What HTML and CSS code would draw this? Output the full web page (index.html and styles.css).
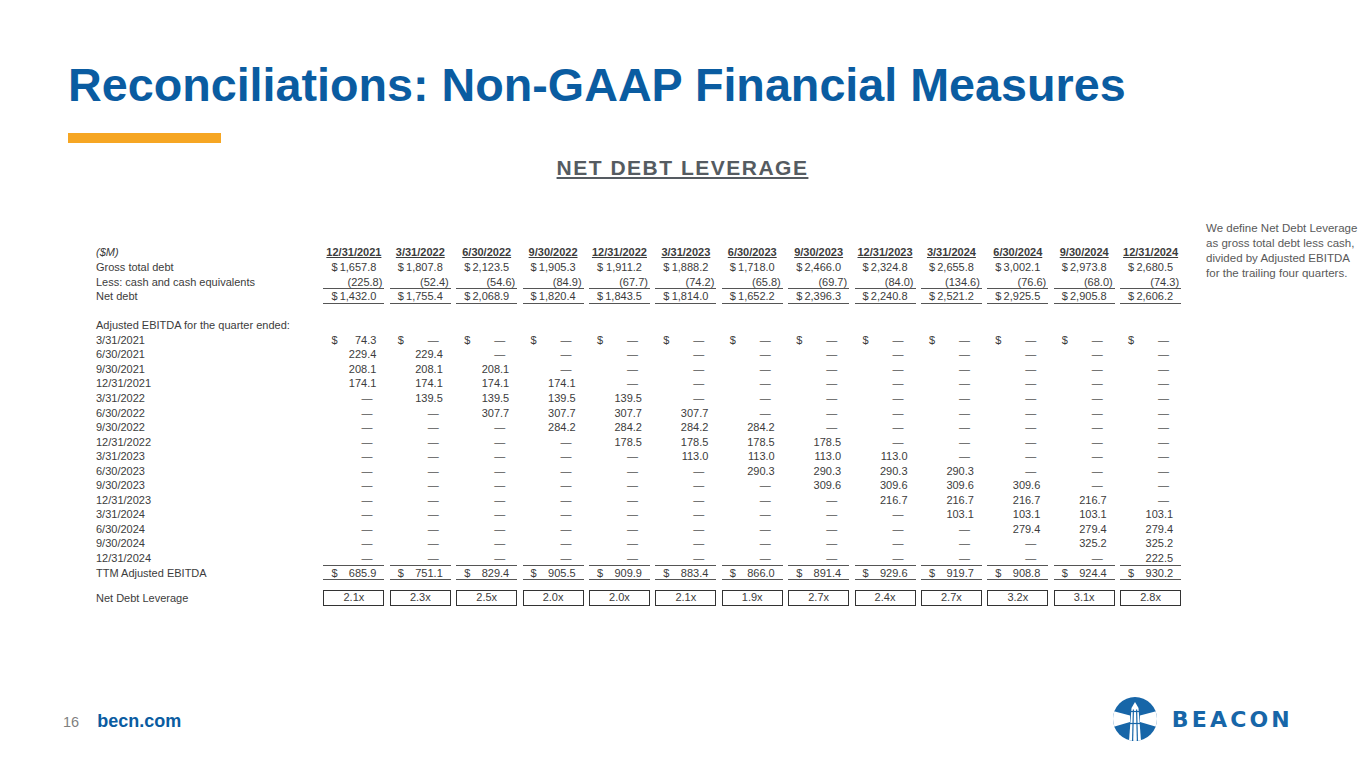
FILE: index.html
```html
<!DOCTYPE html>
<html lang="en">
<head>
<meta charset="utf-8">
<title>Reconciliations: Non-GAAP Financial Measures</title>
<link rel="stylesheet" href="styles.css">
</head>
<body>
<div class="slide">
  <h1 class="title">Reconciliations: Non-GAAP Financial Measures</h1>
  <div class="accent"></div>
  <h2 class="section">NET DEBT LEVERAGE</h2>

  <div class="content">
    <div class="table">
      <div class="row hd"><span class="lab it">($M)</span><span class="h">12/31/2021</span><span class="h">3/31/2022</span><span class="h">6/30/2022</span><span class="h">9/30/2022</span><span class="h">12/31/2022</span><span class="h">3/31/2023</span><span class="h">6/30/2023</span><span class="h">9/30/2023</span><span class="h">12/31/2023</span><span class="h">3/31/2024</span><span class="h">6/30/2024</span><span class="h">9/30/2024</span><span class="h">12/31/2024</span></div>
      <div class="row"><span class="lab">Gross total debt</span><span class="v"><span class="cur">$</span>1,657.8</span><span class="v"><span class="cur">$</span>1,807.8</span><span class="v"><span class="cur">$</span>2,123.5</span><span class="v"><span class="cur">$</span>1,905.3</span><span class="v"><span class="cur">$</span>1,911.2</span><span class="v"><span class="cur">$</span>1,888.2</span><span class="v"><span class="cur">$</span>1,718.0</span><span class="v"><span class="cur">$</span>2,466.0</span><span class="v"><span class="cur">$</span>2,324.8</span><span class="v"><span class="cur">$</span>2,655.8</span><span class="v"><span class="cur">$</span>3,002.1</span><span class="v"><span class="cur">$</span>2,973.8</span><span class="v"><span class="cur">$</span>2,680.5</span></div>
      <div class="row ul"><span class="lab">Less: cash and cash equivalents</span><span class="v n">(225.8)</span><span class="v n">(52.4)</span><span class="v n">(54.6)</span><span class="v n">(84.9)</span><span class="v n">(67.7)</span><span class="v n">(74.2)</span><span class="v n">(65.8)</span><span class="v n">(69.7)</span><span class="v n">(84.0)</span><span class="v n">(134.6)</span><span class="v n">(76.6)</span><span class="v n">(68.0)</span><span class="v n">(74.3)</span></div>
      <div class="row ul"><span class="lab">Net debt</span><span class="v"><span class="cur">$</span>1,432.0</span><span class="v"><span class="cur">$</span>1,755.4</span><span class="v"><span class="cur">$</span>2,068.9</span><span class="v"><span class="cur">$</span>1,820.4</span><span class="v"><span class="cur">$</span>1,843.5</span><span class="v"><span class="cur">$</span>1,814.0</span><span class="v"><span class="cur">$</span>1,652.2</span><span class="v"><span class="cur">$</span>2,396.3</span><span class="v"><span class="cur">$</span>2,240.8</span><span class="v"><span class="cur">$</span>2,521.2</span><span class="v"><span class="cur">$</span>2,925.5</span><span class="v"><span class="cur">$</span>2,905.8</span><span class="v"><span class="cur">$</span>2,606.2</span></div>
      <div class="row blank"></div>
      <div class="row"><span class="lab">Adjusted EBITDA for the quarter ended:</span></div>
      <div class="row"><span class="lab">3/31/2021</span><span class="v"><span class="cur">$</span>74.3</span><span class="v z"><span class="cur">$</span>—</span><span class="v z"><span class="cur">$</span>—</span><span class="v z"><span class="cur">$</span>—</span><span class="v z"><span class="cur">$</span>—</span><span class="v z"><span class="cur">$</span>—</span><span class="v z"><span class="cur">$</span>—</span><span class="v z"><span class="cur">$</span>—</span><span class="v z"><span class="cur">$</span>—</span><span class="v z"><span class="cur">$</span>—</span><span class="v z"><span class="cur">$</span>—</span><span class="v z"><span class="cur">$</span>—</span><span class="v z"><span class="cur">$</span>—</span></div>
      <div class="row"><span class="lab">6/30/2021</span><span class="v">229.4</span><span class="v">229.4</span><span class="v z">—</span><span class="v z">—</span><span class="v z">—</span><span class="v z">—</span><span class="v z">—</span><span class="v z">—</span><span class="v z">—</span><span class="v z">—</span><span class="v z">—</span><span class="v z">—</span><span class="v z">—</span></div>
      <div class="row"><span class="lab">9/30/2021</span><span class="v">208.1</span><span class="v">208.1</span><span class="v">208.1</span><span class="v z">—</span><span class="v z">—</span><span class="v z">—</span><span class="v z">—</span><span class="v z">—</span><span class="v z">—</span><span class="v z">—</span><span class="v z">—</span><span class="v z">—</span><span class="v z">—</span></div>
      <div class="row"><span class="lab">12/31/2021</span><span class="v">174.1</span><span class="v">174.1</span><span class="v">174.1</span><span class="v">174.1</span><span class="v z">—</span><span class="v z">—</span><span class="v z">—</span><span class="v z">—</span><span class="v z">—</span><span class="v z">—</span><span class="v z">—</span><span class="v z">—</span><span class="v z">—</span></div>
      <div class="row"><span class="lab">3/31/2022</span><span class="v z">—</span><span class="v">139.5</span><span class="v">139.5</span><span class="v">139.5</span><span class="v">139.5</span><span class="v z">—</span><span class="v z">—</span><span class="v z">—</span><span class="v z">—</span><span class="v z">—</span><span class="v z">—</span><span class="v z">—</span><span class="v z">—</span></div>
      <div class="row"><span class="lab">6/30/2022</span><span class="v z">—</span><span class="v z">—</span><span class="v">307.7</span><span class="v">307.7</span><span class="v">307.7</span><span class="v">307.7</span><span class="v z">—</span><span class="v z">—</span><span class="v z">—</span><span class="v z">—</span><span class="v z">—</span><span class="v z">—</span><span class="v z">—</span></div>
      <div class="row"><span class="lab">9/30/2022</span><span class="v z">—</span><span class="v z">—</span><span class="v z">—</span><span class="v">284.2</span><span class="v">284.2</span><span class="v">284.2</span><span class="v">284.2</span><span class="v z">—</span><span class="v z">—</span><span class="v z">—</span><span class="v z">—</span><span class="v z">—</span><span class="v z">—</span></div>
      <div class="row"><span class="lab">12/31/2022</span><span class="v z">—</span><span class="v z">—</span><span class="v z">—</span><span class="v z">—</span><span class="v">178.5</span><span class="v">178.5</span><span class="v">178.5</span><span class="v">178.5</span><span class="v z">—</span><span class="v z">—</span><span class="v z">—</span><span class="v z">—</span><span class="v z">—</span></div>
      <div class="row"><span class="lab">3/31/2023</span><span class="v z">—</span><span class="v z">—</span><span class="v z">—</span><span class="v z">—</span><span class="v z">—</span><span class="v">113.0</span><span class="v">113.0</span><span class="v">113.0</span><span class="v">113.0</span><span class="v z">—</span><span class="v z">—</span><span class="v z">—</span><span class="v z">—</span></div>
      <div class="row"><span class="lab">6/30/2023</span><span class="v z">—</span><span class="v z">—</span><span class="v z">—</span><span class="v z">—</span><span class="v z">—</span><span class="v z">—</span><span class="v">290.3</span><span class="v">290.3</span><span class="v">290.3</span><span class="v">290.3</span><span class="v z">—</span><span class="v z">—</span><span class="v z">—</span></div>
      <div class="row"><span class="lab">9/30/2023</span><span class="v z">—</span><span class="v z">—</span><span class="v z">—</span><span class="v z">—</span><span class="v z">—</span><span class="v z">—</span><span class="v z">—</span><span class="v">309.6</span><span class="v">309.6</span><span class="v">309.6</span><span class="v">309.6</span><span class="v z">—</span><span class="v z">—</span></div>
      <div class="row"><span class="lab">12/31/2023</span><span class="v z">—</span><span class="v z">—</span><span class="v z">—</span><span class="v z">—</span><span class="v z">—</span><span class="v z">—</span><span class="v z">—</span><span class="v z">—</span><span class="v">216.7</span><span class="v">216.7</span><span class="v">216.7</span><span class="v">216.7</span><span class="v z">—</span></div>
      <div class="row"><span class="lab">3/31/2024</span><span class="v z">—</span><span class="v z">—</span><span class="v z">—</span><span class="v z">—</span><span class="v z">—</span><span class="v z">—</span><span class="v z">—</span><span class="v z">—</span><span class="v z">—</span><span class="v">103.1</span><span class="v">103.1</span><span class="v">103.1</span><span class="v">103.1</span></div>
      <div class="row"><span class="lab">6/30/2024</span><span class="v z">—</span><span class="v z">—</span><span class="v z">—</span><span class="v z">—</span><span class="v z">—</span><span class="v z">—</span><span class="v z">—</span><span class="v z">—</span><span class="v z">—</span><span class="v z">—</span><span class="v">279.4</span><span class="v">279.4</span><span class="v">279.4</span></div>
      <div class="row"><span class="lab">9/30/2024</span><span class="v z">—</span><span class="v z">—</span><span class="v z">—</span><span class="v z">—</span><span class="v z">—</span><span class="v z">—</span><span class="v z">—</span><span class="v z">—</span><span class="v z">—</span><span class="v z">—</span><span class="v z">—</span><span class="v">325.2</span><span class="v">325.2</span></div>
      <div class="row ul"><span class="lab">12/31/2024</span><span class="v z">—</span><span class="v z">—</span><span class="v z">—</span><span class="v z">—</span><span class="v z">—</span><span class="v z">—</span><span class="v z">—</span><span class="v z">—</span><span class="v z">—</span><span class="v z">—</span><span class="v z">—</span><span class="v z">—</span><span class="v">222.5</span></div>
      <div class="row ul"><span class="lab">TTM Adjusted EBITDA</span><span class="v"><span class="cur">$</span>685.9</span><span class="v"><span class="cur">$</span>751.1</span><span class="v"><span class="cur">$</span>829.4</span><span class="v"><span class="cur">$</span>905.5</span><span class="v"><span class="cur">$</span>909.9</span><span class="v"><span class="cur">$</span>883.4</span><span class="v"><span class="cur">$</span>866.0</span><span class="v"><span class="cur">$</span>891.4</span><span class="v"><span class="cur">$</span>929.6</span><span class="v"><span class="cur">$</span>919.7</span><span class="v"><span class="cur">$</span>908.8</span><span class="v"><span class="cur">$</span>924.4</span><span class="v"><span class="cur">$</span>930.2</span></div>
      <div class="row lev"><span class="lab">Net Debt Leverage</span><span class="box">2.1x</span><span class="box">2.3x</span><span class="box">2.5x</span><span class="box">2.0x</span><span class="box">2.0x</span><span class="box">2.1x</span><span class="box">1.9x</span><span class="box">2.7x</span><span class="box">2.4x</span><span class="box">2.7x</span><span class="box">3.2x</span><span class="box">3.1x</span><span class="box">2.8x</span></div>
    </div>
    <p class="note">We define Net Debt Leverage as gross total debt less cash, divided by Adjusted EBITDA for the trailing four quarters.</p>
  </div>

  <div class="footer">
    <div class="left">
      <span class="pg">16</span>
      <span class="site">becn.com</span>
    </div>
    <div class="logo">
      <svg viewBox="0 0 44 44" aria-hidden="true">
        <defs><clipPath id="cc"><circle cx="22" cy="22" r="22"/></clipPath></defs>
        <circle cx="22" cy="22" r="22" fill="#1766a8"/>
        <g clip-path="url(#cc)" fill="#fff">
          <polygon points="22,5 18.5,11 25.5,11"/>
          <polygon points="18.5,11 25.5,11 28,44 16,44"/>
          <polygon points="0,14 17,18.5 17,25 0,30"/>
          <polygon points="44,14 27,18.5 27,25 44,30"/>
        </g>
        <g stroke="#1766a8" stroke-width="1.2">
          <line x1="20.4" y1="12.5" x2="19.6" y2="44"/>
          <line x1="23.6" y1="12.5" x2="24.4" y2="44"/>
          <line x1="17" y1="14.5" x2="27" y2="14.5"/>
          <line x1="17" y1="26.5" x2="27" y2="26.5"/>
        </g>
      </svg>
      <span class="brand">BEACON</span>
    </div>
  </div>
</div>
</body>
</html>
```

FILE: styles.css
```css
html, body {
  margin: 0;
  padding: 0;
  background: #ffffff;
}

body {
  font-family: "Liberation Sans", Arial, sans-serif;
}

.slide {
  width: 1365px;
  height: 768px;
  box-sizing: border-box;
  padding-top: 62px;
  padding-bottom: 27px;
  display: flex;
  flex-direction: column;
  overflow: hidden;
}

.title {
  margin: 0 0 0 68px;
  font-size: 46.7px;
  line-height: 46.7px;
  font-weight: bold;
  color: #0a5ca1;
  white-space: nowrap;
}

.accent {
  margin: 24.3px 0 0 68px;
  width: 153px;
  height: 10px;
  background: #f6a623;
}

.section {
  margin: 14.3px 0 0 0;
  text-align: center;
  font-size: 21px;
  line-height: 21px;
  font-weight: bold;
  color: #555b61;
  letter-spacing: 1.5px;
  text-decoration: underline;
  text-decoration-thickness: 2px;
  text-underline-offset: 2px;
}

.content {
  display: flex;
  align-items: flex-start;
  margin-top: 43px;
}

.table {
  margin-left: 96px;
  margin-top: 24.2px;
  font-size: 11px;
  color: #3c3c3c;
}

.row {
  display: grid;
  grid-template-columns: 222px repeat(13, 61px);
  column-gap: 5.4px;
  height: 14.55px;
  line-height: 14.55px;
}

.lab {
  white-space: nowrap;
}

.it {
  font-style: italic;
}

.h {
  text-align: center;
  font-weight: bold;
  text-decoration: underline;
  white-space: nowrap;
}

.v {
  display: flex;
  justify-content: flex-end;
  padding: 0 8px;
  white-space: nowrap;
}

.cur {
  margin-right: auto;
}

.v.z {
  padding-right: 12px;
  color: #555;
}

.v.z .cur {
  color: #3c3c3c;
}

.v.n {
  padding-right: 2px;
}

.ul .v {
  box-shadow: inset 0 -1px 0 #555;
}

.lev {
  margin-top: 9.6px;
  height: 16px;
  line-height: 16px;
}

.box {
  box-sizing: border-box;
  height: 16px;
  border: 1.5px solid #333;
  text-align: center;
  line-height: 13px;
}

.note {
  margin: 0 0 0 25px;
  width: 158px;
  font-size: 11.5px;
  line-height: 15px;
  color: #595959;
}

.footer {
  margin-top: auto;
  display: flex;
  align-items: center;
  padding-left: 63px;
  padding-right: 72px;
}

.left {
  display: flex;
  align-items: baseline;
  padding-top: 4px;
}

.pg {
  font-size: 14.5px;
  color: #7f7f7f;
}

.site {
  margin-left: 18px;
  font-size: 18px;
  font-weight: bold;
  color: #0a5ca1;
}

.logo {
  margin-left: auto;
  display: flex;
  align-items: center;
  gap: 15px;
}

.logo svg {
  width: 44px;
  height: 44px;
  display: block;
}

.brand {
  font-family: "DejaVu Sans", "Liberation Sans", sans-serif;
  font-size: 22px;
  font-weight: bold;
  color: #1766a8;
  letter-spacing: 3.2px;
}
```
